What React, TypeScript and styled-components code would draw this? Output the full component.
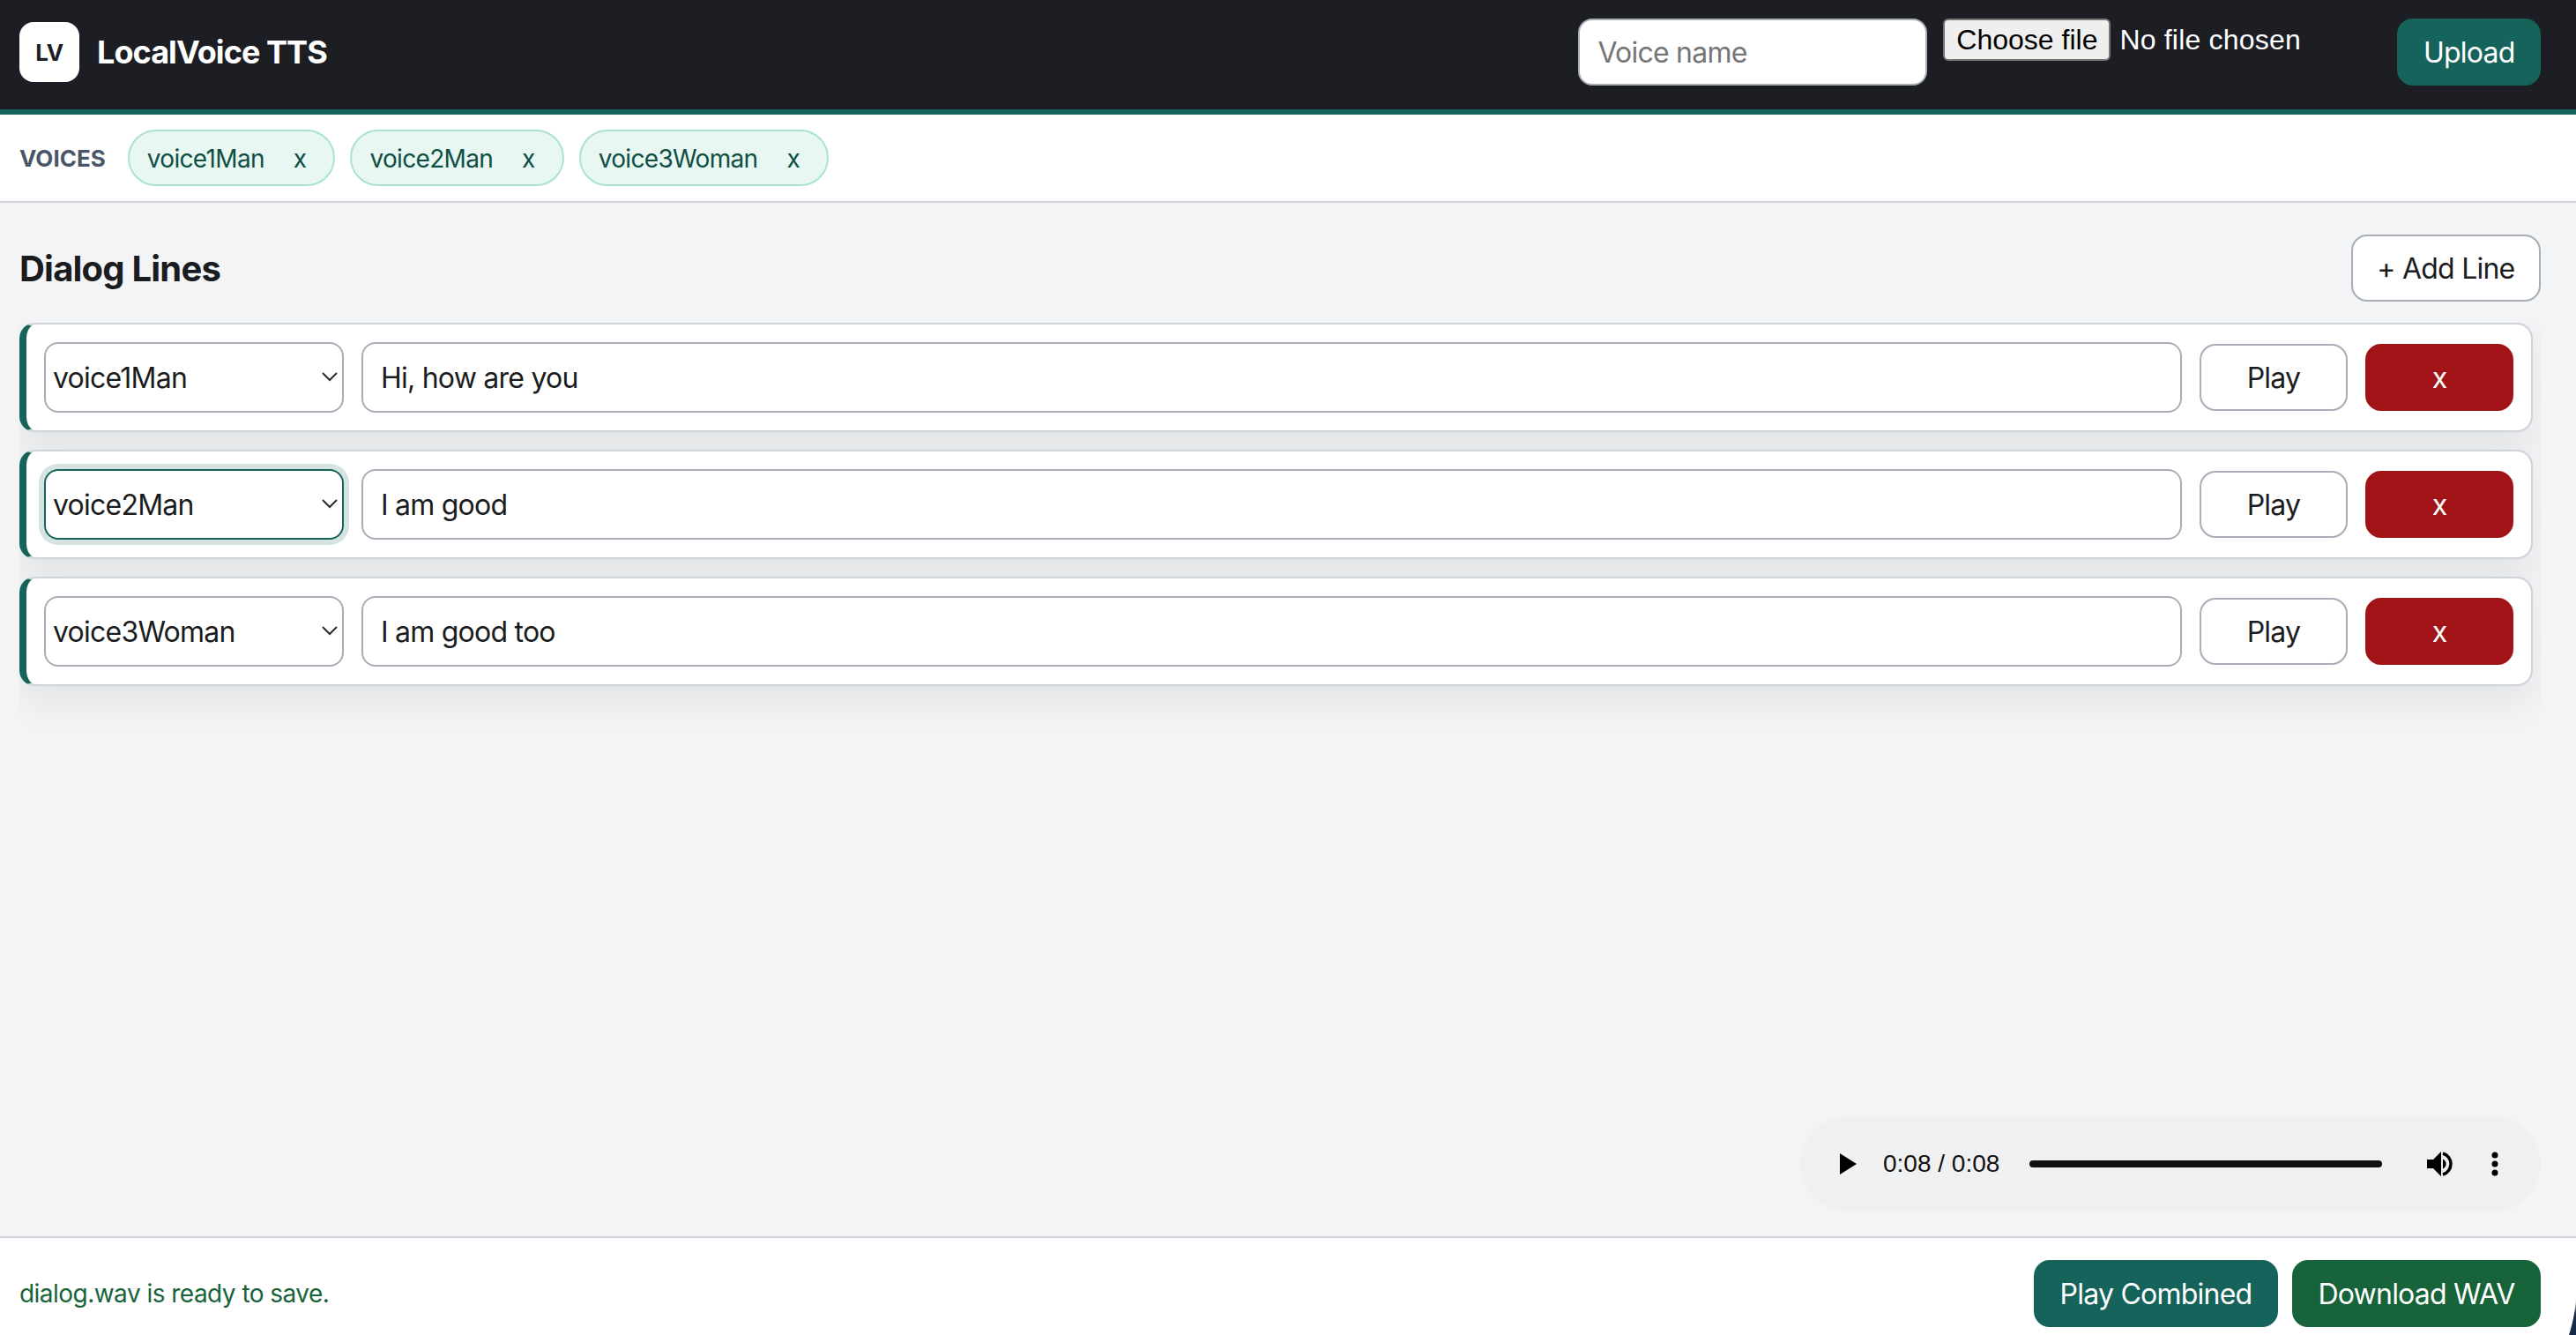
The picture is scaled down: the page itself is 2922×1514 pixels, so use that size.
import React from 'react';
import styled, { createGlobalStyle } from 'styled-components';

const GlobalStyle = createGlobalStyle`
    html, body, #root {
        margin: 0;
        height: 100%;
    }
    * {
        box-sizing: border-box;
    }
    body {
        font-family: Inter, "Liberation Sans", sans-serif;
        color: #1a1c20;
        background: #f3f4f6;
        letter-spacing: -0.024em;
    }
    input, select, button {
        letter-spacing: -0.024em;
    }
`;

const Page = styled.div`
    position: relative;
    height: 1514px;
    display: flex;
    flex-direction: column;
    overflow: hidden;
`;

// Top bar
const Header = styled.header`
    flex: none;
    height: 130px;
    display: flex;
    align-items: flex-start;
    justify-content: space-between;
    padding: 21px 40px 0 22px;
    background: #1c1e24;
    border-bottom: 6px solid #15635a;
`;

const Brand = styled.div`
    display: flex;
    align-items: center;
    gap: 20px;
    margin-top: 4px;
`;

const Logo = styled.div`
    width: 68px;
    height: 68px;
    display: flex;
    align-items: center;
    justify-content: center;
    border-radius: 16px;
    background: #fff;
    color: #1c1e24;
    font-size: 26px;
    font-weight: 700;
`;

const AppName = styled.h1`
    margin: 0;
    color: #fff;
    font-size: 36px;
    font-weight: 700;
    letter-spacing: -0.026em;
`;

const UploadForm = styled.form`
    display: flex;
    align-items: flex-start;
    gap: 18px;
`;

const NameInput = styled.input`
    width: 396px;
    height: 76px;
    padding: 0 20px;
    border: 2px solid #a8adb8;
    border-radius: 16px;
    background: #fff;
    color: #1a1c20;
    font: 400 32px Inter, sans-serif;

    &::placeholder {
        color: #757575;
    }
`;

const FilePicker = styled.div`
    position: relative;
    width: 497px;
    height: 48px;
    display: flex;
    align-items: center;
    gap: 10px;
    color: #fff;
    font: 400 32px "Liberation Sans", Arial, sans-serif;
    letter-spacing: 0.2px;
`;

const FileButton = styled.label`
    width: 190px;
    height: 48px;
    display: flex;
    align-items: center;
    justify-content: center;
    border: 2px solid #767676;
    border-radius: 6px;
    background: #efefef;
    color: #000;
    letter-spacing: 0;
`;

const HiddenFileInput = styled.input`
    position: absolute;
    width: 1px;
    height: 1px;
    opacity: 0;
`;

const Button = styled.button<{ $tone?: 'plain' | 'teal' | 'green' | 'red' }>`
    height: 76px;
    padding: 0 27.5px;
    border: 2px solid ${p => ({ plain: '#a8adb8', teal: '#15635a', green: '#17633a', red: '#a11317' }[p.$tone || 'plain'])};
    border-radius: 18px;
    background: ${p => ({ plain: '#fff', teal: '#15635a', green: '#17633a', red: '#a11317' }[p.$tone || 'plain'])};
    color: ${p => (p.$tone && p.$tone !== 'plain' ? '#fff' : '#1a1c20')};
    font: 400 32px Inter, sans-serif;
    white-space: nowrap;
`;

// Voice chips
const VoiceBar = styled.section`
    flex: none;
    height: 100px;
    display: flex;
    align-items: center;
    gap: 17px;
    padding: 0 22px;
    background: #fff;
    border-bottom: 2px solid #d0d2da;
`;

const VoiceLabel = styled.span`
    margin-right: 8px;
    color: #4b5568;
    font-size: 26px;
    font-weight: 700;
    letter-spacing: 0;
`;

const Chip = styled.span`
    height: 64px;
    display: flex;
    align-items: center;
    gap: 33px;
    padding: 2px 31px 0 20px;
    border: 2px solid #a9e2d2;
    border-radius: 32px;
    background: #e9f7f3;
    color: #0f4f43;
    font-size: 28px;
    letter-spacing: -0.024em;
`;

// Dialog area
const Main = styled.main`
    flex: 1;
    min-height: 0;
    display: flex;
    flex-direction: column;
    padding: 36px 40px 28px 22px;
`;

const TitleRow = styled.div`
    flex: none;
    display: flex;
    align-items: center;
    justify-content: space-between;
    margin-bottom: 24px;
`;

const Title = styled.h2`
    margin: 0;
    font-size: 40px;
    font-weight: 700;
    letter-spacing: -0.02em;
`;

const LineList = styled.div`
    flex: 1;
    min-height: 0;
    display: flex;
    flex-direction: column;
    gap: 20px;
    padding-right: 9px;
    overflow: hidden;
`;

const LineCard = styled.div`
    flex: none;
    display: grid;
    grid-template-columns: 340px 1fr 168px 168px;
    align-items: center;
    gap: 20px;
    padding: 20px;
    border: 2px solid #d0d2da;
    border-left: 8px solid #15635a;
    border-radius: 18px;
    background: #fff;
    box-shadow: 0 16px 48px rgba(0, 0, 0, 0.08);
`;

const SelectWrap = styled.div`
    position: relative;
`;

const VoiceSelect = styled.select<{ $focused?: boolean }>`
    display: block;
    width: 100%;
    height: 80px;
    padding: 0 40px 0 8px;
    appearance: none;
    border: 2px solid ${p => (p.$focused ? '#15635a' : '#a8adb8')};
    border-radius: 16px;
    background: #fff;
    box-shadow: ${p => (p.$focused ? '0 0 0 6px rgba(21, 99, 90, 0.18)' : 'none')};
    color: #1a1c20;
    font: 400 32px Inter, sans-serif;
`;

const Chevron = styled.svg`
    position: absolute;
    top: 34px;
    right: 7px;
    width: 18px;
    height: 11px;
    pointer-events: none;
`;

const LineInput = styled.input`
    width: 100%;
    height: 80px;
    padding: 0 20px;
    border: 2px solid #a8adb8;
    border-radius: 16px;
    background: #fff;
    color: #1a1c20;
    font: 400 32px Inter, sans-serif;
`;

const RowButton = styled(Button)`
    padding: 0;
`;

// Audio player, drawn because an empty <audio> can't show the 0:08 state
const Player = styled.div`
    flex: none;
    align-self: flex-end;
    width: 840px;
    height: 108px;
    display: flex;
    align-items: center;
    padding: 0 42px 0 45px;
    border-radius: 54px;
    background: #eff0f2;
`;

const PlayIcon = styled.svg`
    width: 20px;
    height: 24px;
    margin-right: 29px;
`;

const Time = styled.span`
    width: 133px;
    margin-right: 33px;
    color: #111;
    font: 400 28px "Liberation Sans", Arial, sans-serif;
    letter-spacing: 0;
    white-space: nowrap;
`;

const Track = styled.div`
    width: 400px;
    height: 8px;
    margin-right: 50px;
    border-radius: 4px;
    background: #111;
`;

const VolumeIcon = styled.svg`
    width: 32px;
    height: 30px;
    margin-right: 42px;
`;

const MoreIcon = styled.svg`
    width: 8px;
    height: 28px;
`;

// Footer
const Footer = styled.footer`
    flex: none;
    height: 112px;
    display: flex;
    align-items: flex-start;
    justify-content: space-between;
    padding: 25px 40px 0 22px;
    background: #fff;
    border-top: 2px solid #d0d2da;
`;

const Status = styled.span`
    align-self: center;
    margin-bottom: 10px;
    color: #17633a;
    font-size: 28px;
    letter-spacing: -0.019em;
`;

const FooterActions = styled.div`
    display: flex;
    gap: 16px;
`;

const WindowCorner = styled.svg`
    position: absolute;
    right: 0;
    bottom: 0;
    width: 8px;
    height: 44px;
`;

const voices = ['voice1Man', 'voice2Man', 'voice3Woman'];

const lines = [
    { voice: 'voice1Man', text: 'Hi, how are you' },
    { voice: 'voice2Man', text: 'I am good', focused: true },
    { voice: 'voice3Woman', text: 'I am good too' },
];

export default function App() {
    return (
        <Page>
            <GlobalStyle />
            <Header>
                <Brand>
                    <Logo>LV</Logo>
                    <AppName>LocalVoice TTS</AppName>
                </Brand>
                <UploadForm>
                    <NameInput type="text" placeholder="Voice name" />
                    <FilePicker>
                        <FileButton htmlFor="voice-file">Choose file</FileButton>
                        <span>No file chosen</span>
                        <HiddenFileInput id="voice-file" type="file" />
                    </FilePicker>
                    <Button $tone="teal" type="button">Upload</Button>
                </UploadForm>
            </Header>

            <VoiceBar>
                <VoiceLabel>VOICES</VoiceLabel>
                {voices.map(v => (
                    <Chip key={v}>
                        <span>{v}</span>
                        <span>x</span>
                    </Chip>
                ))}
            </VoiceBar>

            <Main>
                <TitleRow>
                    <Title>Dialog Lines</Title>
                    <Button type="button">+ Add Line</Button>
                </TitleRow>

                <LineList>
                    {lines.map(line => (
                        <LineCard key={line.voice}>
                            <SelectWrap>
                                <VoiceSelect $focused={line.focused} defaultValue={line.voice}>
                                    {voices.map(v => <option key={v}>{v}</option>)}
                                </VoiceSelect>
                                <Chevron viewBox="0 0 18 11" fill="none" stroke="#2a2c30" strokeWidth="2">
                                    <path d="M1 1l8 8 8-8" />
                                </Chevron>
                            </SelectWrap>
                            <LineInput type="text" defaultValue={line.text} />
                            <RowButton type="button">Play</RowButton>
                            <RowButton $tone="red" type="button">x</RowButton>
                        </LineCard>
                    ))}
                </LineList>

                <Player>
                    <PlayIcon viewBox="0 0 20 24">
                        <path d="M0 0l19 12L0 24z" fill="#000" />
                    </PlayIcon>
                    <Time>0:08 / 0:08</Time>
                    <Track />
                    <VolumeIcon viewBox="0 0 32 30">
                        <path d="M1 10h7l9-9v28l-9-9H1z" fill="#000" />
                        <path d="M19 9.5a6 6 0 0 1 0 11z" fill="#000" />
                        <path d="M19 3a12.5 12.5 0 0 1 0 24" fill="none" stroke="#000" strokeWidth="3.5" />
                    </VolumeIcon>
                    <MoreIcon viewBox="0 0 8 28">
                        <circle cx="4" cy="4" r="3.5" fill="#000" />
                        <circle cx="4" cy="14" r="3.5" fill="#000" />
                        <circle cx="4" cy="24" r="3.5" fill="#000" />
                    </MoreIcon>
                </Player>
            </Main>

            <Footer>
                <Status>dialog.wav is ready to save.</Status>
                <FooterActions>
                    <Button $tone="teal" type="button">Play Combined</Button>
                    <Button $tone="green" type="button">Download WAV</Button>
                </FooterActions>
            </Footer>

            <WindowCorner viewBox="0 0 8 44">
                <defs>
                    <linearGradient id="cornerFade" x1="0" y1="0" x2="0" y2="1">
                        <stop offset="0" stopColor="#fff" />
                        <stop offset="0.45" stopColor="#1a2c48" />
                        <stop offset="1" stopColor="#16284a" />
                    </linearGradient>
                </defs>
                <path d="M8 0C7.5 16 4 32 0 44h8z" fill="url(#cornerFade)" />
            </WindowCorner>
        </Page>
    );
}
